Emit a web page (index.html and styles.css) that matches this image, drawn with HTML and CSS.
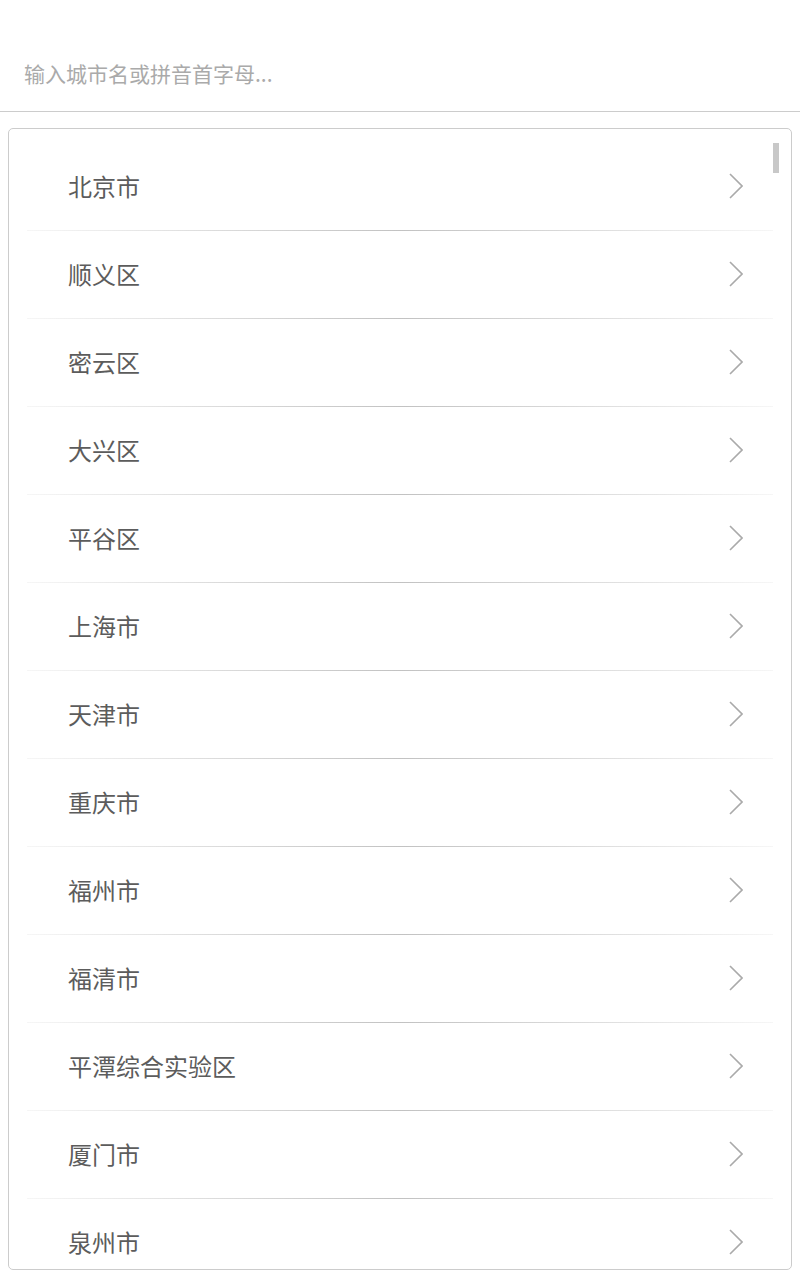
FILE: index.html
```html
<!DOCTYPE html>
<html lang="zh-CN">
<head>
<meta charset="utf-8">
<title>城市选择</title>
<link rel="stylesheet" href="styles.css">
</head>
<body>
<div class="search">
  <input class="search-input" type="text" placeholder="输入城市名或拼音首字母...">
</div>
<div class="box">
  <ul class="list">
    <li class="row"><span class="name">北京市</span><svg class="chev" viewBox="0 0 14 26"><polyline points="1,1 13,13 1,25"/></svg></li>
    <li class="row"><span class="name">顺义区</span><svg class="chev" viewBox="0 0 14 26"><polyline points="1,1 13,13 1,25"/></svg></li>
    <li class="row"><span class="name">密云区</span><svg class="chev" viewBox="0 0 14 26"><polyline points="1,1 13,13 1,25"/></svg></li>
    <li class="row"><span class="name">大兴区</span><svg class="chev" viewBox="0 0 14 26"><polyline points="1,1 13,13 1,25"/></svg></li>
    <li class="row"><span class="name">平谷区</span><svg class="chev" viewBox="0 0 14 26"><polyline points="1,1 13,13 1,25"/></svg></li>
    <li class="row"><span class="name">上海市</span><svg class="chev" viewBox="0 0 14 26"><polyline points="1,1 13,13 1,25"/></svg></li>
    <li class="row"><span class="name">天津市</span><svg class="chev" viewBox="0 0 14 26"><polyline points="1,1 13,13 1,25"/></svg></li>
    <li class="row"><span class="name">重庆市</span><svg class="chev" viewBox="0 0 14 26"><polyline points="1,1 13,13 1,25"/></svg></li>
    <li class="row"><span class="name">福州市</span><svg class="chev" viewBox="0 0 14 26"><polyline points="1,1 13,13 1,25"/></svg></li>
    <li class="row"><span class="name">福清市</span><svg class="chev" viewBox="0 0 14 26"><polyline points="1,1 13,13 1,25"/></svg></li>
    <li class="row"><span class="name">平潭综合实验区</span><svg class="chev" viewBox="0 0 14 26"><polyline points="1,1 13,13 1,25"/></svg></li>
    <li class="row"><span class="name">厦门市</span><svg class="chev" viewBox="0 0 14 26"><polyline points="1,1 13,13 1,25"/></svg></li>
    <li class="row"><span class="name">泉州市</span><svg class="chev" viewBox="0 0 14 26"><polyline points="1,1 13,13 1,25"/></svg></li>
  </ul>
  <div class="scrollbar"></div>
</div>
</body>
</html>
```

FILE: styles.css
```css
html, body {
  margin: 0;
  padding: 0;
  background: #fff;
  font-family: "Noto Sans CJK SC", "Noto Sans", sans-serif;
}

.search {
  height: 112px;
  border-bottom: 1px solid #cccccc;
  display: flex;
  align-items: flex-end;
  padding: 0 24px 18px;
  box-sizing: border-box;
}

.search-input {
  width: 100%;
  height: 40px;
  border: none;
  outline: none;
  padding: 0;
  margin: 0;
  font-family: "Noto Sans CJK SC", "Noto Sans", sans-serif;
  font-size: 21px;
  color: #555;
  background: transparent;
}

.search-input::placeholder {
  color: #aaaaaa;
}

.box {
  position: relative;
  margin: 16px 8px 0;
  height: 1142px;
  box-sizing: border-box;
  border: 1px solid #cccccc;
  border-radius: 5px;
  overflow: hidden;
}

.list {
  list-style: none;
  margin: 0;
  padding: 14px 0 0;
}

.row {
  position: relative;
  height: 88px;
  display: flex;
  align-items: center;
  justify-content: space-between;
  padding: 0 48px 0 59px;
  box-sizing: border-box;
}

.row::after {
  content: "";
  position: absolute;
  left: 18px;
  right: 18px;
  bottom: 0;
  height: 1px;
  background: linear-gradient(90deg, #f6f6f6 0%, #c2c2c2 50%, #f6f6f6 100%);
}

.name {
  font-size: 24px;
  color: #5c5c5c;
  line-height: 1;
  margin-bottom: 2px;
}

.chev {
  width: 14px;
  height: 26px;
  fill: none;
  stroke: #aaaaaa;
  stroke-width: 1.6;
  margin-bottom: 3px;
}

.scrollbar {
  position: absolute;
  top: 14px;
  right: 12px;
  width: 6px;
  height: 30px;
  background: #c8c8c8;
}
```
